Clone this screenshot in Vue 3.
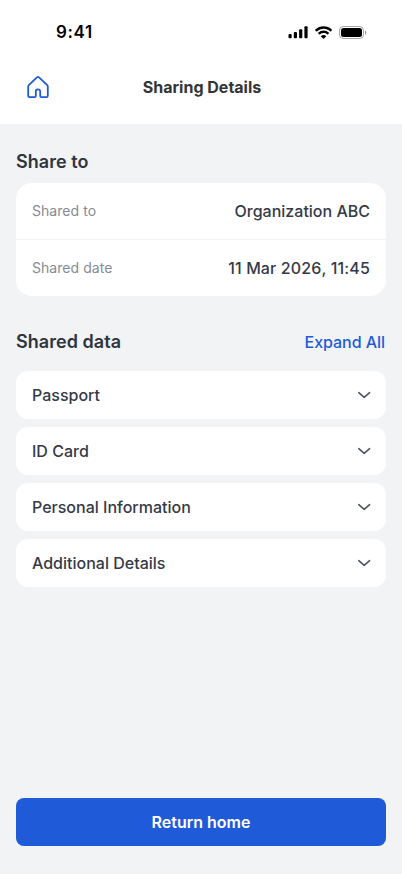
<script setup>
const details = [
  { label: 'Shared to', value: 'Organization ABC' },
  { label: 'Shared date', value: '11 Mar 2026, 11:45', numeric: true },
]
const sections = ['Passport', 'ID Card', 'Personal Information', 'Additional Details']
</script>

<template>
  <div class="screen">
    <header class="top">
      <div class="status">
        <span class="time">9:41</span>
        <div class="indicators">
          <svg class="signal" width="20" height="13" viewBox="0 0 20 13">
            <rect x="0.5" y="8" width="3.2" height="4.3" rx="1" />
            <rect x="5.8" y="5.9" width="3.2" height="6.4" rx="1" />
            <rect x="11.1" y="3.3" width="3.2" height="9" rx="1" />
            <rect x="16.4" y="0.3" width="3.2" height="12" rx="1" />
          </svg>
          <svg class="wifi" width="17" height="13" viewBox="0 0 17 12.3">
            <path d="M8.57 2.47c2.49 0 4.88.95 6.68 2.67.13.13.35.13.49 0l1.3-1.31a.35.35 0 0 0 0-.5C12.3-1.12 4.84-1.12.1 3.33a.35.35 0 0 0 0 .5l1.3 1.31c.13.13.35.13.48 0a9.66 9.66 0 0 1 6.69-2.67Zm0 4.25c1.36 0 2.68.51 3.69 1.43.13.13.35.13.49-.01l1.29-1.31a.36.36 0 0 0 0-.51 7.97 7.97 0 0 0-10.93 0 .36.36 0 0 0 0 .51l1.29 1.31c.14.14.35.14.49.01a5.47 5.47 0 0 1 3.68-1.43Zm2.52 2.87c.14.13.14.36 0 .5L8.82 12.34a.35.35 0 0 1-.5 0L6.05 10.09a.35.35 0 0 1 .01-.5 3.92 3.92 0 0 1 5.03 0Z" />
          </svg>
          <svg class="battery" width="28" height="13" viewBox="0 0 28 13">
            <rect class="shell" x="0.5" y="0.5" width="24" height="12" rx="3.8" />
            <path class="cap" d="M26 4.5v4c.8-.35 1.35-1.1 1.35-2s-.55-1.65-1.35-2Z" />
            <rect x="2" y="2" width="21" height="9" rx="2.5" />
          </svg>
        </div>
      </div>
      <div class="nav">
        <button class="home" aria-label="Home">
          <svg width="24" height="24" viewBox="0 0 24 24">
            <path d="M12.8 2.2 21.2 10.1c.4.4.6.8.6 1.3v9.4c0 .8-.5 1.3-1.3 1.3h-5.2c-.7 0-1.1-.4-1.1-1.1v-4.5c0-1.3-.8-2.1-2.2-2.1s-2.2.8-2.2 2.1V21c0 .7-.4 1.1-1.1 1.1H3.5c-.8 0-1.3-.5-1.3-1.3v-9.4c0-.5.2-.9.6-1.3l8.4-7.9c.5-.5 1.1-.5 1.6 0Z" />
          </svg>
        </button>
        <h1>Sharing Details</h1>
      </div>
    </header>

    <main>
      <section class="share">
        <h2>Share to</h2>
        <dl class="card">
          <div v-for="item in details" :key="item.label" class="row">
            <dt>{{ item.label }}</dt>
            <dd :class="{ numeric: item.numeric }">{{ item.value }}</dd>
          </div>
        </dl>
      </section>

      <section class="data">
        <div class="heading">
          <h2>Shared data</h2>
          <button class="expand">Expand All</button>
        </div>
        <div class="list">
          <button v-for="name in sections" :key="name" class="item">
            <span>{{ name }}</span>
            <svg width="14" height="10" viewBox="0 0 14 10">
              <path d="M1.8 2.6 7.2 7.4l5.4-4.8" />
            </svg>
          </button>
        </div>
      </section>
    </main>

    <footer>
      <button class="return">Return home</button>
    </footer>
  </div>
</template>

<style>
body {
  margin: 0;
  background: #f1f3f5;
}
</style>

<style scoped>
.screen {
  display: flex;
  flex-direction: column;
  height: 874px;
  background: #f1f3f5;
  color: #343a46;
  font-family: Inter, sans-serif;
}
button {
  padding: 0;
  border: 0;
  background: none;
  color: inherit;
  font: inherit;
}
svg {
  display: block;
}
h1, h2, dl, dd {
  margin: 0;
}
.top {
  height: 124px;
  background: #fff;
}
.status {
  display: flex;
  justify-content: space-between;
  align-items: center;
  height: 50px;
  padding: 14px 35px 0 56px;
  box-sizing: border-box;
}
.time {
  color: #000;
  font-size: 17px;
  font-weight: 600;
  letter-spacing: 0.6px;
  line-height: 22px;
}
.indicators {
  display: flex;
  align-items: center;
  gap: 7px;
}
.battery .shell {
  fill: none;
  stroke: #000;
  stroke-opacity: 0.35;
}
.battery .cap {
  fill-opacity: 0.4;
}
.nav {
  display: grid;
  grid-template-columns: 24px 1fr 24px;
  align-items: center;
  height: 74px;
  padding: 0 24px 0 26px;
}
.home path {
  fill: none;
  stroke: #1f5bd8;
  stroke-width: 1.8;
}
h1 {
  color: #333538;
  font-size: 16px;
  font-weight: 700;
  line-height: 24px;
  text-align: center;
}
main {
  flex: 1;
  padding: 24px 16px 0;
}
h2 {
  color: #30343e;
  font-size: 18px;
  font-weight: 600;
  letter-spacing: 0.04px;
  line-height: 27px;
}
.card {
  margin-top: 8px;
  border-radius: 16px;
  background: #fff;
}
.row {
  display: flex;
  justify-content: space-between;
  align-items: center;
  height: 56px;
  padding: 0 16px;
}
.row + .row {
  border-top: 1px solid #f1f3f5;
}
dt {
  padding-bottom: 2px;
  color: #868b96;
  font-size: 14px;
  letter-spacing: 0.05px;
}
dd {
  font-size: 16px;
  font-weight: 500;
}
.numeric {
  font-kerning: none;
  letter-spacing: 0.13px;
}
.data {
  margin-top: 32px;
}
.heading {
  display: flex;
  justify-content: space-between;
  align-items: center;
}
.expand {
  padding-right: 1px;
  color: #1f5bd8;
  font-size: 16px;
  font-weight: 500;
  letter-spacing: -0.05px;
  line-height: 24px;
}
.list {
  display: grid;
  gap: 8px;
  margin-top: 16px;
}
.item {
  display: flex;
  justify-content: space-between;
  align-items: center;
  height: 48px;
  padding: 0 15px 0 16px;
  border-radius: 12px;
  background: #fff;
  font-size: 16px;
  font-weight: 500;
}
.item path {
  fill: none;
  stroke: #4c515e;
  stroke-width: 1.5;
  stroke-linecap: round;
  stroke-linejoin: round;
}
footer {
  padding: 0 16px 28px;
}
.return {
  width: 100%;
  height: 48px;
  border-radius: 8px;
  background: #1f5bd8;
  color: #fff;
  font-size: 16px;
  font-weight: 600;
}
</style>
